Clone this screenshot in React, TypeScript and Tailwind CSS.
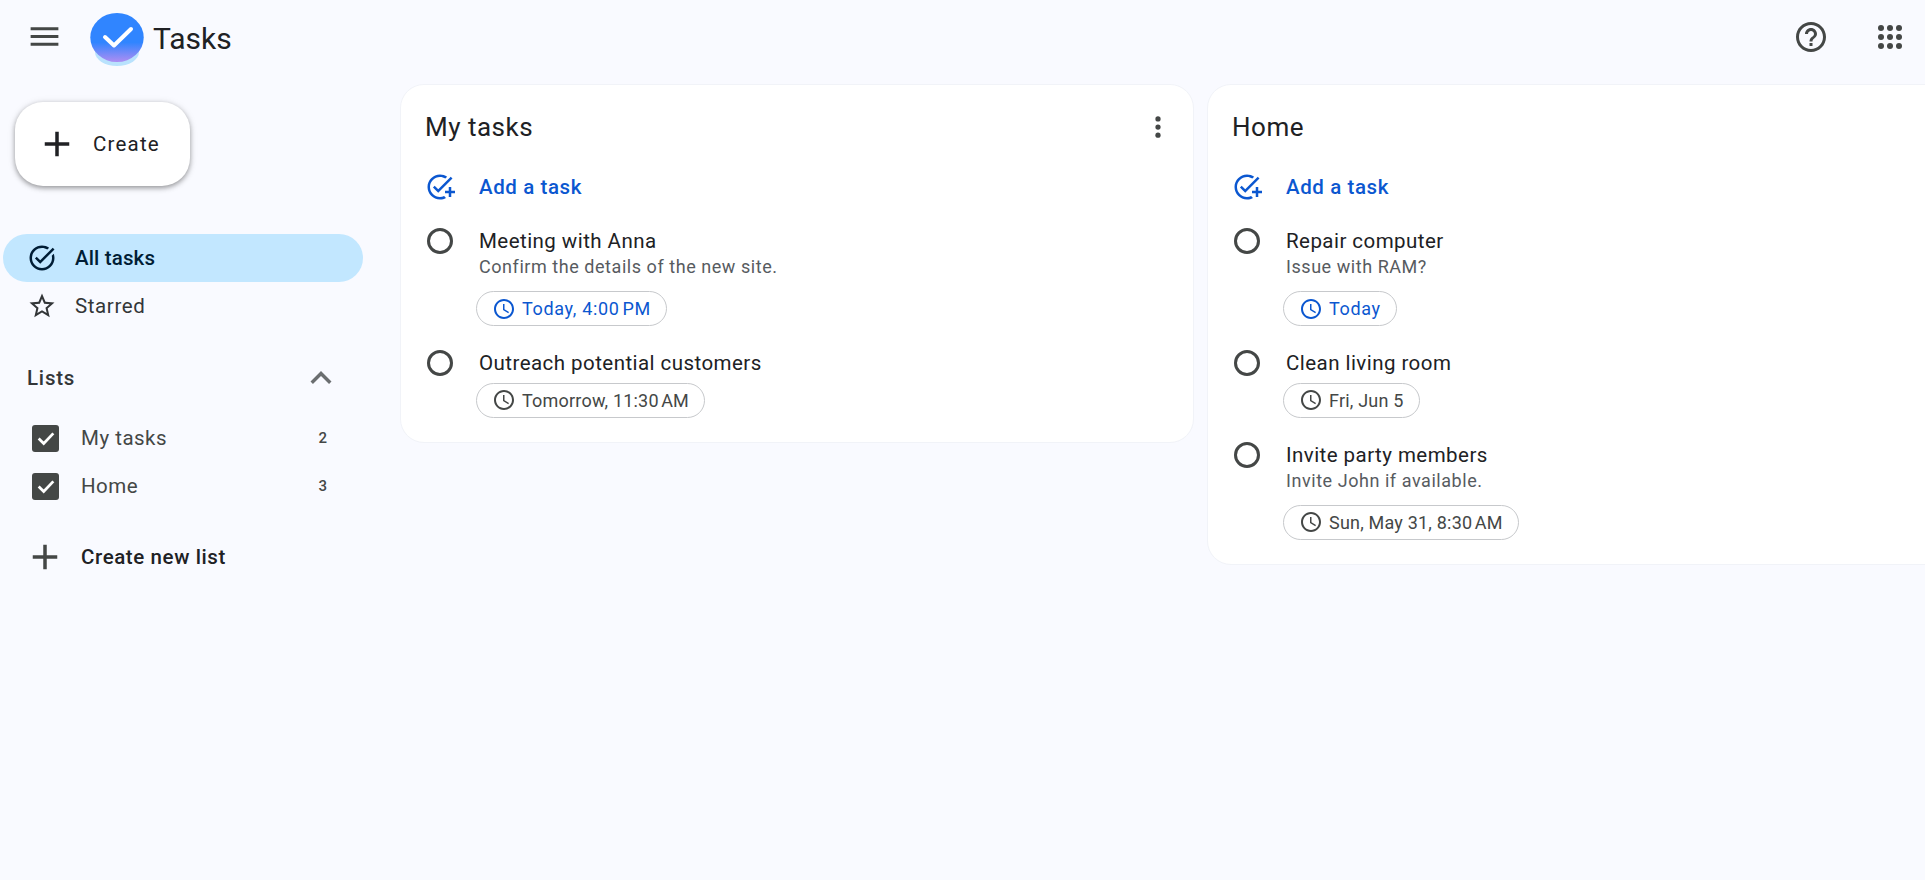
import type { ReactNode } from "react"

function Icon({ d, className }: { d: string; className?: string }) {
  return (
    <svg viewBox="0 0 24 24" fill="currentColor" className={className}>
      <path d={d} />
    </svg>
  )
}

const plusPath = "M19 13h-6v6h-2v-6H5v-2h6V5h2v6h6v2z"
const addTaskPath =
  "M22,5.18L10.59,16.6l-4.24-4.24l1.41-1.41l2.83,2.83l10-10L22,5.18z M12,20c-4.41,0-8-3.59-8-8s3.59-8,8-8c1.57,0,3.04,0.46,4.28,1.25l1.45-1.45C16.1,2.67,14.13,2,12,2C6.48,2,2,6.48,2,12s4.48,10,10,10c1.73,0,3.36-0.44,4.78-1.22l-1.5-1.5C14.28,19.74,13.17,20,12,20z M19,15h-3v2h3v3h2v-3h3v-2h-3v-3h-2V15z"
const taskAltPath =
  "M22,5.18L10.59,16.6l-4.24-4.24l1.41-1.41l2.83,2.83l10-10L22,5.18z M19.79,10.22C19.92,10.79,20,11.39,20,12c0,4.42-3.58,8-8,8s-8-3.58-8-8c0-4.42,3.58-8,8-8c1.58,0,3.04,0.46,4.28,1.25l1.44-1.44C16.1,2.67,14.13,2,12,2C6.48,2,2,6.48,2,12c0,5.52,4.48,10,10,10s10-4.48,10-10c0-1.19-0.22-2.33-0.6-3.39L19.79,10.22z"
const starPath =
  "M22 9.24l-7.19-.62L12 2 9.19 8.63 2 9.24l5.46 4.73L5.82 21 12 17.27 18.18 21l-1.63-7.03L22 9.24zM12 15.4l-3.76 2.27 1-4.28-3.32-2.88 4.38-.38L12 6.1l1.71 4.04 4.38.38-3.32 2.88 1 4.28L12 15.4z"
const clockPath =
  "M11.99 2C6.47 2 2 6.48 2 12s4.47 10 9.99 10C17.52 22 22 17.52 22 12S17.52 2 11.99 2zM12 20c-4.42 0-8-3.58-8-8s3.58-8 8-8 8 3.58 8 8-3.58 8-8 8zm.5-13H11v6l5.25 3.15.75-1.23-4.5-2.67z"
const helpPath =
  "M11 18h2v-2h-2v2zm1-16C6.48 2 2 6.48 2 12s4.48 10 10 10 10-4.48 10-10S17.52 2 12 2zm0 18c-4.41 0-8-3.59-8-8s3.59-8 8-8 8 3.59 8 8-3.59 8-8 8zm0-14c-2.21 0-4 1.79-4 4h2c0-1.1.9-2 2-2s2 .9 2 2c0 2-3 1.75-3 5h2c0-2.25 3-2.5 3-5 0-2.21-1.79-4-4-4z"

function Logo() {
  return (
    <svg viewBox="0 0 54 54" className="w-[54px] h-[54px] self-start mt-[13px]">
      <defs>
        <linearGradient id="logoFill" x1="0" y1="0" x2="0" y2="1">
          <stop offset="0.6" stopColor="#3085ff" />
          <stop offset="0.98" stopColor="#a88df3" />
        </linearGradient>
      </defs>
      <ellipse cx="27" cy="39" rx="22" ry="14" fill="#b9e2fd" />
      <ellipse cx="27" cy="24.5" rx="26.7" ry="24.5" fill="url(#logoFill)" />
      <path d="M15 24l9 8.5L41 16" fill="none" stroke="#fff" strokeWidth="4" strokeLinecap="round" strokeLinejoin="round" />
    </svg>
  )
}

function AppsGrid() {
  const spots = [6, 15, 24]
  return (
    <svg viewBox="0 0 30 30" className="w-[30px] h-[30px] text-[#444746]" fill="currentColor">
      {spots.map((y) => spots.map((x) => <circle key={`${x}-${y}`} cx={x} cy={y} r="3" />))}
    </svg>
  )
}

function Header() {
  return (
    <header className="h-[84px] shrink-0 flex items-center pb-[11px]">
      <div className="w-[90px] pl-[26px]">
        <svg viewBox="0 0 24 24" fill="currentColor" className="w-[37px] h-[37px] text-[#444746]">
          <path d="M3 18h18v-2H3v2zm0-5h18v-2H3v2zm0-7v2h18V6H3z" />
        </svg>
      </div>
      <Logo />
      <span className="ml-[9px] mt-[4px] text-[30px] text-[#202124] leading-none">Tasks</span>
      <div className="ml-auto flex items-center gap-[46px] pr-[20px]">
        <Icon d={helpPath} className="w-[36px] h-[36px] text-[#444746]" />
        <AppsGrid />
      </div>
    </header>
  )
}

function NavRow({ icon, label, active }: { icon: string; label: string; active?: boolean }) {
  return (
    <div
      className={
        active
          ? "ml-[3px] w-[360px] h-[48px] flex items-center pl-[24px] rounded-full bg-[#c2e7ff] text-[#001d35] font-medium tracking-[0.15px]"
          : "ml-[3px] w-[360px] h-[48px] flex items-center pl-[24px] rounded-full text-[#333638] tracking-[0.6px]"
      }
    >
      <Icon d={icon} className="w-[30px] h-[30px]" />
      <span className="ml-[18px] text-[20.5px]">{label}</span>
    </div>
  )
}

function ListRow({ label, count }: { label: string; count: number }) {
  return (
    <div className="h-[48px] flex items-center pl-[32px] text-[#444746]">
      <div className="w-[27px] h-[27px] rounded-[3px] bg-[#444746] flex items-center justify-center">
        <svg viewBox="0 0 24 24" className="w-[22px] h-[22px]" fill="none" stroke="#fff" strokeWidth="3">
          <path d="M4 12.5l5.5 5.5L20 7" />
        </svg>
      </div>
      <span className="ml-[22px] text-[20.5px] tracking-[0.5px]">{label}</span>
      <span className="ml-auto mr-[73px] text-[15px] font-medium">{count}</span>
    </div>
  )
}

function Sidebar() {
  return (
    <aside className="w-[400px] shrink-0">
      <button className="ml-[15px] mt-[18px] w-[175px] h-[84px] rounded-[28px] bg-white flex items-center pl-[21px] text-[#202124] shadow-[0_2px_5px_rgba(0,0,0,0.35),0_1px_8px_rgba(0,0,0,0.1)]">
        <svg viewBox="0 0 24 24" fill="currentColor" className="w-[42px] h-[42px] shrink-0">
          <path d={plusPath} />
        </svg>
        <span className="ml-[15px] text-[20.5px] tracking-[1.2px]">Create</span>
      </button>
      <nav className="mt-[48px]">
        <NavRow icon={taskAltPath} label="All tasks" active />
        <NavRow icon={starPath} label="Starred" />
      </nav>
      <div className="mt-[24px] h-[48px] flex items-center pl-[27px] pr-[58px] text-[20.5px] font-medium text-[#333638] tracking-[0.8px]">
        Lists
        <svg viewBox="0 0 24 24" fill="currentColor" className="ml-auto w-[42px] h-[42px] text-[#6b6e70]">
          <path d="M7.41 15.41L12 10.83l4.59 4.58L18 14l-6-6-6 6z" />
        </svg>
      </div>
      <div className="mt-[12px]">
        <ListRow label="My tasks" count={2} />
        <ListRow label="Home" count={3} />
      </div>
      <div className="mt-[23px] h-[48px] flex items-center pl-[24px] text-[#202124]">
        <Icon d={plusPath} className="w-[42px] h-[42px] text-[#444746]" />
        <span className="ml-[15px] text-[20.5px] font-medium tracking-[0.6px]">Create new list</span>
      </div>
    </aside>
  )
}

type Task = { title: string; note?: string; due: string; today?: boolean }

function Chip({ children, today }: { children: ReactNode; today?: boolean }) {
  return (
    <div
      className={
        today
          ? "inline-flex items-center h-[35px] pl-[17px] pr-[15px] rounded-full border border-[#c7c9cc] text-[18px] tracking-[0.66px] text-[#0b57d0]"
          : "inline-flex items-center h-[35px] pl-[17px] pr-[15px] rounded-full border border-[#c7c9cc] text-[18px] tracking-[0.2px] text-[#444746]"
      }
    >
      <Icon d={clockPath} className="w-[24px] h-[24px] -mx-[2px]" />
      <span className="ml-[8px]">{children}</span>
    </div>
  )
}

function TaskRow({ task }: { task: Task }) {
  return (
    <div className="flex">
      <div className="w-[53px] shrink-0">
        <div className="ml-[1px] w-[26px] h-[26px] rounded-full border-[3px] border-[#444746]" />
      </div>
      <div>
        <div className="h-[26px] leading-[26px] text-[20.5px] tracking-[0.45px] text-[#202124]">{task.title}</div>
        {task.note && (
          <div className="pt-[1px] h-[25px] leading-[24px] text-[18px] tracking-[0.55px] text-[#575b5f]">{task.note}</div>
        )}
        <div className={task.note ? "mt-[12px] -ml-[3px]" : "mt-[6.5px] -ml-[3px]"}>
          <Chip today={task.today}>{task.due}</Chip>
        </div>
      </div>
    </div>
  )
}

function TaskCard({ title, tasks, menu }: { title: string; tasks: Task[]; menu?: boolean }) {
  return (
    <section className="w-[794px] shrink-0 self-start rounded-[24px] bg-white border border-[#f1f3f8] pl-[25px] pr-[24px] pt-[26px] pb-[23px]">
      <div className="h-[32px] flex items-center justify-between">
        <h2 className="-ml-[1px] text-[26px] tracking-[0.5px] text-[#202124]">{title}</h2>
        {menu && (
          <svg viewBox="0 0 24 24" className="w-[30px] h-[30px] text-[#444746] -mr-[4px]" fill="currentColor">
            <circle cx="12" cy="5.5" r="2.1" />
            <circle cx="12" cy="12" r="2.1" />
            <circle cx="12" cy="18.5" r="2.1" />
          </svg>
        )}
      </div>
      <div className="mt-[28px] h-[32px] flex items-center text-[#0b57d0]">
        <div className="w-[53px] shrink-0">
          <Icon d={addTaskPath} className="w-[30px] h-[30px] -ml-[1px]" />
        </div>
        <span className="text-[20.5px] font-medium tracking-[0.6px]">Add a task</span>
      </div>
      <div className="mt-[25px] flex flex-col gap-[22.5px]">
        {tasks.map((t) => (
          <TaskRow key={t.title} task={t} />
        ))}
      </div>
    </section>
  )
}

const myTasks: Task[] = [
  { title: "Meeting with Anna", note: "Confirm the details of the new site.", due: "Today, 4:00\u202fPM", today: true },
  { title: "Outreach potential customers", due: "Tomorrow, 11:30\u202fAM" },
]

const homeTasks: Task[] = [
  { title: "Repair computer", note: "Issue with RAM?", due: "Today", today: true },
  { title: "Clean living room", due: "Fri, Jun 5" },
  { title: "Invite party members", note: "Invite John if available.", due: "Sun, May 31, 8:30\u202fAM" },
]

export default function App() {
  return (
    <div className="h-screen overflow-hidden flex flex-col bg-[#f9faff] font-['Roboto',sans-serif]">
      <Header />
      <div className="flex flex-1 min-h-0">
        <Sidebar />
        <main className="flex-1 min-w-0 flex items-start gap-[13px] overflow-hidden">
          <TaskCard title="My tasks" tasks={myTasks} menu />
          <TaskCard title="Home" tasks={homeTasks} />
        </main>
      </div>
    </div>
  )
}
